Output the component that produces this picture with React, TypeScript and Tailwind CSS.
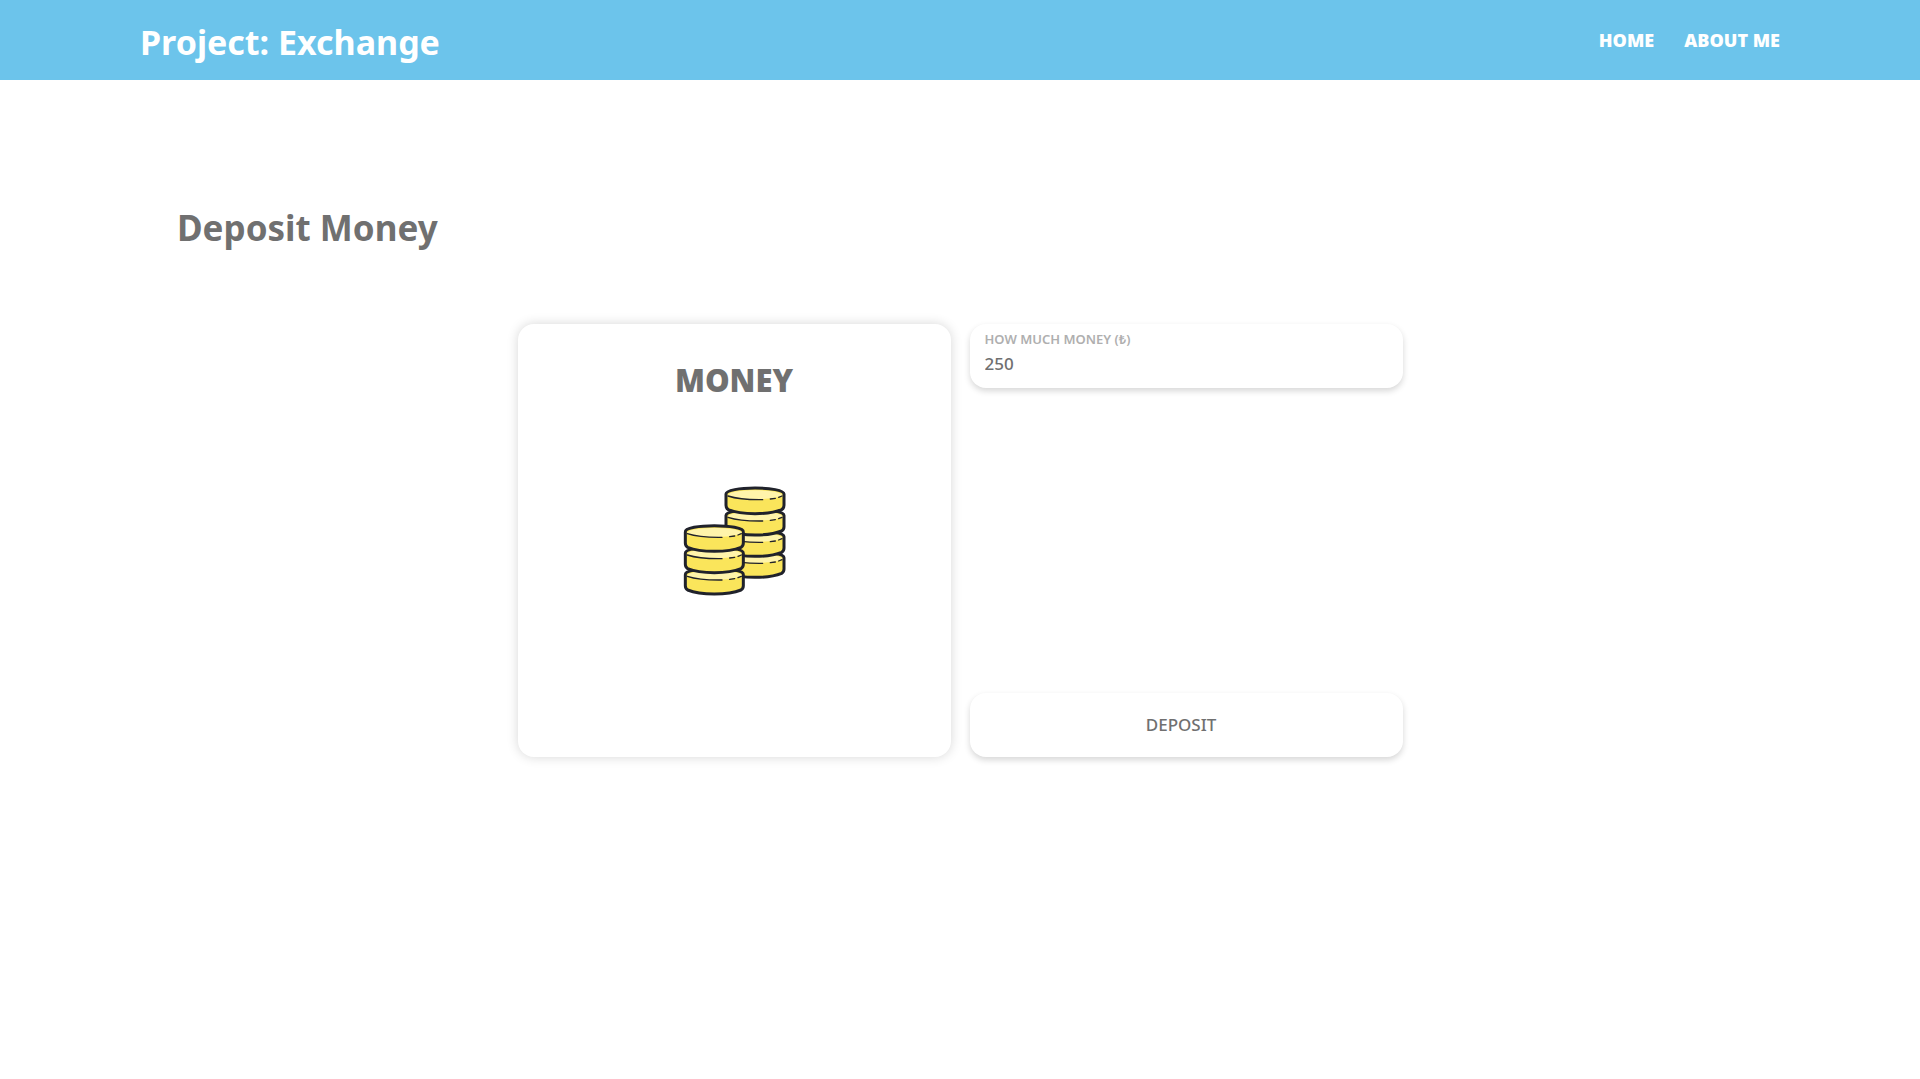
const rightCoins = [236, 173, 109, 45];
const leftCoins = [286, 222, 158];

function Coin({ x, y }: { x: number; y: number }) {
  return (
    <g transform={`translate(${x} ${y})`}>
      <path
        d="M2 13C-1 -12 179 -12 176 13V46Q176 55 169 59C130 75 48 75 9 59Q2 55 2 46Z"
        fill="#fae55b"
        stroke="#20222b"
        strokeWidth="9"
        strokeLinejoin="round"
      />
      <path d="M8 16C10-4 168-4 171 16C150 30 40 34 8 16Z" fill="#fff4ab" />
      <path d="M8 18Q45 30 112 29" fill="none" stroke="#20222b" strokeWidth="4" strokeLinecap="round" />
      <path d="M135 27l15-2M160 22l10-4" fill="none" stroke="#20222b" strokeWidth="4" strokeLinecap="round" />
    </g>
  );
}

function CoinStacks() {
  return (
    <svg viewBox="0 0 390 390" className="size-[130px]" aria-hidden="true">
      {rightCoins.map((y) => (
        <Coin key={y} x={169} y={y} />
      ))}
      {leftCoins.map((y) => (
        <Coin key={y} x={47} y={y} />
      ))}
    </svg>
  );
}

export default function App() {
  return (
    <div className="min-h-screen bg-white font-['Noto_Sans','Open_Sans',sans-serif] text-[#707070]">
      <header className="flex h-20 items-center justify-between bg-[#6cc4eb] px-[140px] text-white">
        <a href="#home" className="pt-1 text-[34px] leading-10 font-bold">
          Project: Exchange
        </a>
        <nav className="flex gap-[30px] text-lg font-black">
          <a href="#home">HOME</a>
          <a href="#about">ABOUT ME</a>
        </nav>
      </header>
      <main className="px-[177px] pt-32">
        <h1 className="text-[35px] leading-10 font-bold">Deposit Money</h1>
        <form className="mx-auto mt-[76px] grid max-w-[885px] grid-cols-2 gap-[19px]">
          <section className="flex aspect-square flex-col items-center rounded-2xl bg-white pt-9 shadow-[0_0_12px_rgba(0,0,0,0.16)]">
            <h2 className="text-[31px] leading-10 font-black">MONEY</h2>
            <div className="mt-[75px]">
              <CoinStacks />
            </div>
          </section>
          <div className="flex flex-col justify-between">
            <label className="flex h-16 flex-col rounded-2xl bg-white px-[15px] pt-[7px] shadow-[0_3px_6px_rgba(0,0,0,0.16)]">
              <span className="text-[13px] leading-4 font-semibold text-[#afafaf]">HOW MUCH MONEY (₺)</span>
              <input
                type="text"
                inputMode="numeric"
                defaultValue="250"
                className="h-8 w-full bg-transparent text-[17px] font-medium outline-none"
              />
            </label>
            <button
              type="button"
              className="h-16 rounded-2xl bg-white pr-[10px] text-[17px] font-medium shadow-[0_3px_6px_rgba(0,0,0,0.16)]"
            >
              DEPOSIT
            </button>
          </div>
        </form>
      </main>
    </div>
  );
}
